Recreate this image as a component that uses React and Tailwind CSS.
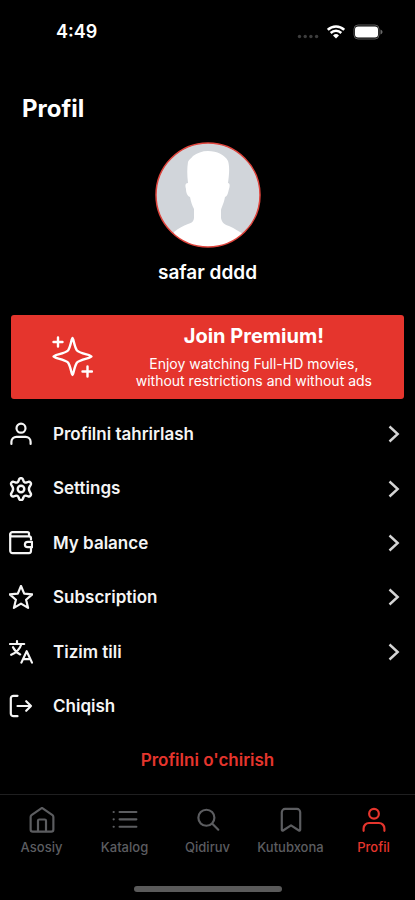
import React from 'react'

function Icon({ size = 24, width = 2, className = '', viewBox = '0 0 24 24', children }) {
  return (
    <svg
      width={size}
      height={size}
      viewBox={viewBox}
      fill="none"
      stroke="currentColor"
      strokeWidth={width}
      strokeLinecap="round"
      strokeLinejoin="round"
      className={className}
      aria-hidden="true"
    >
      {children}
    </svg>
  )
}

const UserIcon = props => (
  <Icon {...props}>
    <circle cx="12" cy="6.2" r="4.5" />
    <path d="M2.4 22v-2.2a5 5 0 0 1 5-5h9.2a5 5 0 0 1 5 5V22" />
  </Icon>
)

const GearIcon = props => (
  <Icon {...props} viewBox="1 0.6 22 22">
    <path d="M10.2 2.9a1.9 1.900 0 0 1 3.600 0l.4 1.100a2.200 2.200 0 0 0 3.100 1.500l1.300-.4a1.900 1.900 0 0 1 2.300 2.700l-.8 1.300a4.500 4.500 0 0 0 0 5l.8 1.500a1.900 1.900 0 0 1-2.300 2.700l-1.300-.4a2.200 2.200 0 0 0-3.100 1.500l-.4 1.100a1.900 1.900 0 0 1-3.600 0l-.4-1.100a2.200 2.200 0 0 0-3.100-1.500l-1.300.4a1.900 1.900 0 0 1-2.300-2.700l.8-1.500a4.500 4.500 0 0 0 0-5l-.8-1.300a1.900 1.900 0 0 1 2.300-2.700l1.300.4a2.200 2.200 0 0 0 3.100-1.500z" />
    <circle cx="12" cy="11.600" r="3" />
  </Icon>
)

const WalletIcon = props => (
  <Icon {...props}>
    <path d="M22 8.500V7.400a2 2 0 0 0-2-2H3.200a2 2 0 0 1-2-2" />
    <path d="M20 5V2.600a1.500 1.500 0 0 0-1.500-1.500H3.600a2.300 2.300 0 0 0-2.400 2.300v16.400a2.300 2.300 0 0 0 2.300 2.300H20a2 2 0 0 0 2-2v-3.500" />
    <path d="M23 10.800h-4.400a2.700 2.700 0 0 0 0 5.400H23z" />
  </Icon>
)

const StarIcon = props => (
  <Icon {...props}>
    <path d="M12 1l3.200 7.700 8.100.6-6.200 5.500 2 8.100L12 18.600l-7.100 4.300 2-8.100L.7 9.300l8.100-.6z" />
  </Icon>
)

const TranslateIcon = props => (
  <Icon {...props}>
    <path d="M1 4h14.200M8 1.200v2.600M4 7.200c1.500 3.200 4.200 5.800 7.200 7.200M12.200 4.500C11 8.600 7.200 12.600 2.200 14.800" />
    <path d="M12.400 22.600L17.700 11.200l5.300 11.400M14.400 19.200h6.600" />
  </Icon>
)

const LogoutIcon = props => (
  <Icon {...props}>
    <path d="M8.500 1.800h-4a2.700 2.700 0 0 0-2.700 2.700v15a2.700 2.700 0 0 0 2.700 2.700h4" />
    <path d="M8.500 12H22M17.200 7.200L22 12l-4.800 4.800" />
  </Icon>
)

const HomeIcon = props => (
  <Icon {...props}>
    <path d="M1.500 9.200a2 2 0 0 1 .8-1.600L12 .9l9.700 6.700a2 2 0 0 1 .8 1.600v11.500a2 2 0 0 1-2 2h-17a2 2 0 0 1-2-2z" />
    <path d="M8.300 22.200v-9.500a1.200 1.200 0 0 1 1.200-1.200h5a1.200 1.200 0 0 1 1.200 1.200v9.500" />
  </Icon>
)

const ListIcon = props => (
  <Icon {...props}>
    <path d="M7 4.600h15.500M7 11.400h15.500M7 18.200h15.500M1.500 4.600h.1M1.500 11.400h.1M1.500 18.200h.1" />
  </Icon>
)

const SearchIcon = props => (
  <Icon {...props}>
    <circle cx="10.500" cy="9.900" r="7.400" />
    <path d="M16 15.400l5.500 5.500" />
  </Icon>
)

const BookmarkIcon = props => (
  <Icon {...props}>
    <path d="M3.500 21V4.800a3 3 0 0 1 3-3h11a3 3 0 0 1 3 3V21a.8.8 0 0 1-1.200.7L12 17l-7.300 4.700A.8.8 0 0 1 3.500 21z" />
  </Icon>
)

const ChevronIcon = () => (
  <svg width="12" height="18" viewBox="0 0 12 18" fill="none" stroke="currentColor" strokeWidth="2.4" className="text-neutral-300" aria-hidden="true">
    <path d="M1.500 1.500L9.700 9l-8.200 7.500" />
  </svg>
)

const SparklesIcon = () => (
  <svg width="42" height="42" viewBox="0 0 42 42" fill="none" stroke="currentColor" strokeWidth="2.4" strokeLinecap="round" strokeLinejoin="round" aria-hidden="true">
    <path d="M21.500 2c1 0 1.800 9 4.500 12.500 3 3.200 14.500 4.500 14.500 6s-11.500 2.800-14.500 6c-2.700 3.500-3.500 12.500-4.500 12.500s-1.800-9-4.500-12.500c-3-3.200-14.500-4.500-14.500-6s11.500-2.800 14.500-6c2.700-3.500 3.500-12.500 4.500-12.500z" />
    <path d="M7 1.500v9M2.500 6h9M36.500 30.500v10M31.500 35.500h9.500" />
  </svg>
)

const menu = [
  { label: 'Profilni tahrirlash', icon: UserIcon, chevron: true },
  { label: 'Settings', icon: GearIcon, chevron: true },
  { label: 'My balance', icon: WalletIcon, chevron: true },
  { label: 'Subscription', icon: StarIcon, chevron: true },
  { label: 'Tizim tili', icon: TranslateIcon, chevron: true },
  { label: 'Chiqish', icon: LogoutIcon, chevron: false },
]

const tabs = [
  { label: 'Asosiy', icon: HomeIcon },
  { label: 'Katalog', icon: ListIcon },
  { label: 'Qidiruv', icon: SearchIcon },
  { label: 'Kutubxona', icon: BookmarkIcon },
  { label: 'Profil', icon: UserIcon, active: true },
]

function StatusBar() {
  return (
    <div className="flex h-16 items-center justify-between pl-14 pr-8">
      <span className="text-lg font-semibold">4:49</span>
      <div className="flex items-center gap-2">
        <svg width="22" height="16" viewBox="0 0 22 16" fill="#3d3d3d" aria-hidden="true">
          <circle cx="2.500" cy="12.500" r="1.700" />
          <circle cx="8.200" cy="12.500" r="1.700" />
          <circle cx="13.900" cy="12.500" r="1.700" />
          <circle cx="19.600" cy="12.500" r="1.700" />
        </svg>
        <svg width="18" height="14" viewBox="0 0 18 14" fill="none" stroke="white" strokeWidth="2.500" aria-hidden="true">
          <path d="M.8 4.800a11.800 11.800 0 0 1 16.400 0" />
          <path d="M3.700 8a7.600 7.600 0 0 1 10.600 0" />
          <path d="M9 13.600L6 10.500a4.300 4.300 0 0 1 6 0z" fill="white" stroke="none" />
        </svg>
        <svg width="30" height="16" viewBox="0 0 30 16" aria-hidden="true">
          <rect x="1" y="1" width="25" height="14" rx="4" fill="none" stroke="#5a5a5a" />
          <rect x="2" y="2.500" width="23" height="11" rx="3" fill="white" />
          <path d="M27.500 5.500v5c1.200-.4 2-1.300 2-2.500s-.8-2.100-2-2.500z" fill="#6a6a6a" />
        </svg>
      </div>
    </div>
  )
}

function Avatar() {
  return (
    <svg width="106" height="106" viewBox="0 0 106 106" role="img" aria-label="safar dddd">
      <clipPath id="avatar-clip">
        <circle cx="53" cy="53" r="52" />
      </clipPath>
      <circle cx="53" cy="53" r="52" fill="#d1d5da" />
      <path
        clipPath="url(#avatar-clip)"
        fill="white"
        d="M33 41c-1-8-1-15 0-21 1-3 3-3 5-6 4-3 9-5 15-5 9 0 17 4 20 10 2 6 1 15 0 22 2 0 2 3 1 6-1 3-1 7-4 8-1 6-3 9-4 13v8c1 5 4 7 8 8 6 3 10 5 15 9v15H19V90c5-4 9-6 14-8 4-1 6-3 6-7v-8c-2-4-3-7-4-12-3-1-4-5-4-8-1-3-1-6 2-6z"
      />
      <circle cx="53" cy="53" r="52" fill="none" stroke="#e0453d" strokeWidth="1.500" />
    </svg>
  )
}

export default function App() {
  return (
    <div className="flex min-h-screen flex-col bg-black font-['Inter',sans-serif] text-white">
      <StatusBar />

      <main className="flex flex-1 flex-col">
        <h1 className="px-[22px] pt-[29px] text-2xl font-bold">Profil</h1>

        <section className="flex flex-col items-center pt-[17px]">
          <Avatar />
          <h2 className="mt-[9px] text-[19px] leading-8 font-semibold">safar dddd</h2>
        </section>

        <button type="button" className="mx-[11px] mt-[26px] flex h-[84px] items-center rounded-[3px] bg-[#e5352d] pr-8 pl-10">
          <SparklesIcon />
          <span className="flex flex-1 flex-col items-end">
            <span className="flex flex-col items-center text-center">
              <span className="text-xl leading-7 font-bold">Join Premium!</span>
              <span className="mt-[5px] mb-1 text-sm leading-[17px]">
                Enjoy watching Full-HD movies,
                <br />
                without restrictions and without ads
              </span>
            </span>
          </span>
        </button>

        <nav className="mt-2 mb-1.5 flex flex-1 flex-col">
          {menu.map(({ label, icon: ItemIcon, chevron }) => (
            <button key={label} type="button" className="flex flex-1 items-center pr-[15px] pl-[9px] text-left">
              <ItemIcon size={24} width={2.2} className="text-neutral-100" />
              <span className="ml-5 flex-1 pt-px text-[17px] font-semibold text-neutral-100">{label}</span>
              {chevron && <ChevronIcon />}
            </button>
          ))}
          <button type="button" className="flex-1 pt-px text-[17px] font-semibold text-[#e5352d]">
            Profilni o'chirish
          </button>
        </nav>
      </main>

      <footer className="border-t border-[#1f1f20] pb-2">
        <nav className="grid grid-cols-5 pt-3">
          {tabs.map(({ label, icon: TabIcon, active }) => (
            <a
              key={label}
              href="#"
              aria-current={active ? 'page' : undefined}
              className={`flex flex-col items-center gap-1 text-[13px] leading-5 font-medium ${active ? 'text-[#e5352d]' : 'text-[#5c5d60]'}`}
            >
              <TabIcon size={26} />
              {label}
            </a>
          ))}
        </nav>
        <div className="mx-auto mt-[29px] h-1.5 w-[148px] rounded-full bg-[#5a5a5a]" />
      </footer>
    </div>
  )
}
